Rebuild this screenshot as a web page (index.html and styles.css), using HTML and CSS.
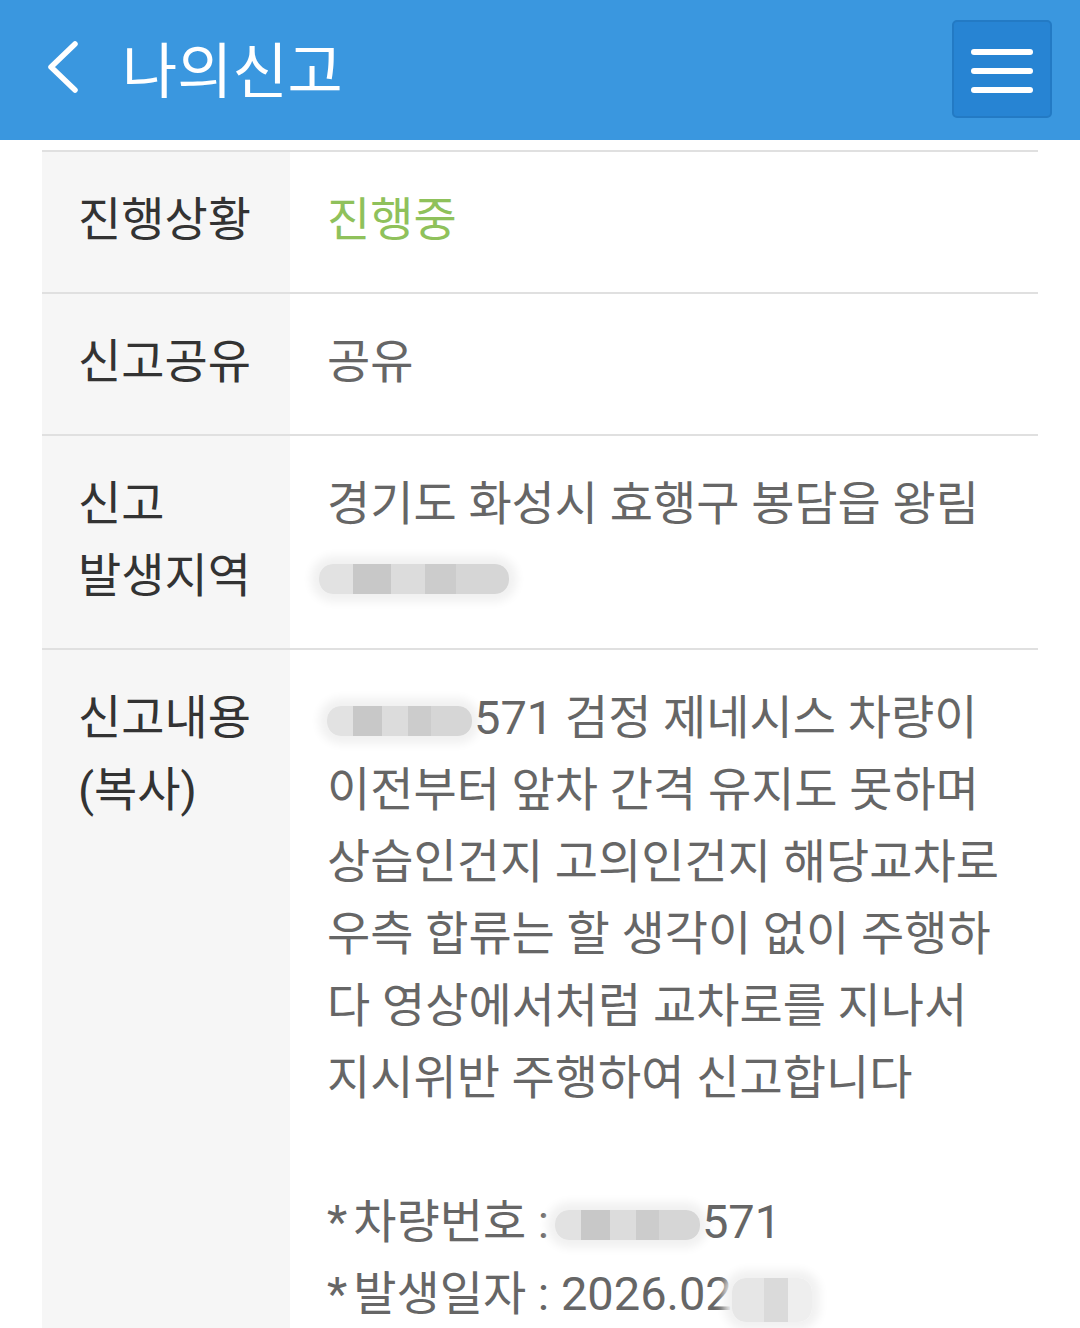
FILE: index.html
```html
<!DOCTYPE html>
<html lang="ko">
<head>
  <meta charset="UTF-8">
  <title>나의신고</title>
  <link rel="stylesheet" href="styles.css">
</head>
<body>

<!-- 상단 바 -->
<header class="topbar">
  <div class="topbar-left">
    <svg class="back-icon" width="40" height="56" viewBox="0 0 40 56">
      <path d="M31 5 L7 28 L31 51" fill="none" stroke="#fff" stroke-width="5.5" stroke-linecap="round" stroke-linejoin="round"/>
    </svg>
    <h1 class="title">나의신고</h1>
  </div>
  <button class="menu-btn" type="button">
    <span></span><span></span><span></span>
  </button>
</header>

<!-- 신고 상세 -->
<div class="detail">
  <div class="row">
    <div class="label">진행상황</div>
    <div class="value status">진행중</div>
  </div>
  <div class="row">
    <div class="label">신고공유</div>
    <div class="value">공유</div>
  </div>
  <div class="row">
    <div class="label">신고<br>발생지역</div>
    <div class="value">경기도 화성시 효행구 봉담읍 왕림<br><span class="mask mask-addr"></span></div>
  </div>
  <div class="row">
    <div class="label">신고내용<br>(복사)</div>
    <div class="value">
      <span class="mask mask-plate"></span>571 검정 제네시스 차량이<br>
      이전부터 앞차 간격 유지도 못하며<br>
      상습인건지 고의인건지 해당교차로<br>
      우측 합류는 할 생각이 없이 주행하<br>
      다 영상에서처럼 교차로를 지나서<br>
      지시위반 주행하여 신고합니다<br>
      <br>
      <span class="star">*</span>차량번호 : <span class="mask mask-plate2"></span>571<br>
      <span class="star">*</span>발생일자 : 2026.02<span class="mask mask-date"></span>
    </div>
  </div>
</div>

</body>
</html>
```

FILE: styles.css
```css
body {
  margin: 0;
  font-family: Roboto, "Noto Sans CJK KR", sans-serif;
  background: #fff;
  overflow: hidden;
}

.topbar {
  height: 140px;
  background: #3a97df;
  display: flex;
  align-items: center;
  justify-content: space-between;
  padding: 0 28px 0 44px;
}

.topbar-left {
  display: flex;
  align-items: center;
}

.back-icon {
  margin-top: -6px;
}

.title {
  margin: -8px 0 0 38px;
  font-size: 60px;
  font-weight: 400;
  color: #fff;
}

.menu-btn {
  width: 100px;
  height: 98px;
  margin-top: -2px;
  background: #2784d3;
  border: 2px solid #237ac4;
  border-radius: 5px;
  display: flex;
  flex-direction: column;
  align-items: center;
  justify-content: flex-start;
  gap: 13px;
  padding-top: 27px;
}

.menu-btn span {
  width: 62px;
  height: 6px;
  background: #fff;
  border-radius: 3px;
}

.detail {
  margin: 10px 42px 0;
  border-top: 2px solid #e0e0e0;
}

.row {
  display: grid;
  grid-template-columns: 248px 1fr;
  border-bottom: 2px solid #e0e0e0;
}

.label,
.value {
  font-size: 47px;
  line-height: 72px;
  padding: 32px 0 36px 36px;
}

.label {
  background: #f6f6f6;
  color: #333;
}

.value {
  color: #666;
  padding-left: 37px;
}

.status {
  color: #8fc15b;
}

.star {
  margin-right: 6px;
}

/* 가려진 부분 */
.mask {
  display: inline-block;
  height: 30px;
  vertical-align: -2px;
  background: linear-gradient(90deg, #e2e2e2 0 18%, #c8c8c8 18% 38%, #dcdcdc 38% 56%, #cccccc 56% 72%, #d6d6d6 72% 100%);
  box-shadow: 0 0 10px 8px #f1f1f1;
  border-radius: 14px;
}

.mask-addr {
  width: 190px;
  margin-left: -8px;
}

.mask-plate {
  width: 145px;
  margin-right: 2px;
}

.mask-plate2 {
  width: 145px;
  margin-left: -6px;
  margin-right: 2px;
}

.mask-date {
  width: 80px;
  height: 44px;
  vertical-align: -12px;
  background: linear-gradient(90deg, #e6e6e6 0 40%, #dadada 40% 70%, #eeeeee 70% 100%);
}
```
